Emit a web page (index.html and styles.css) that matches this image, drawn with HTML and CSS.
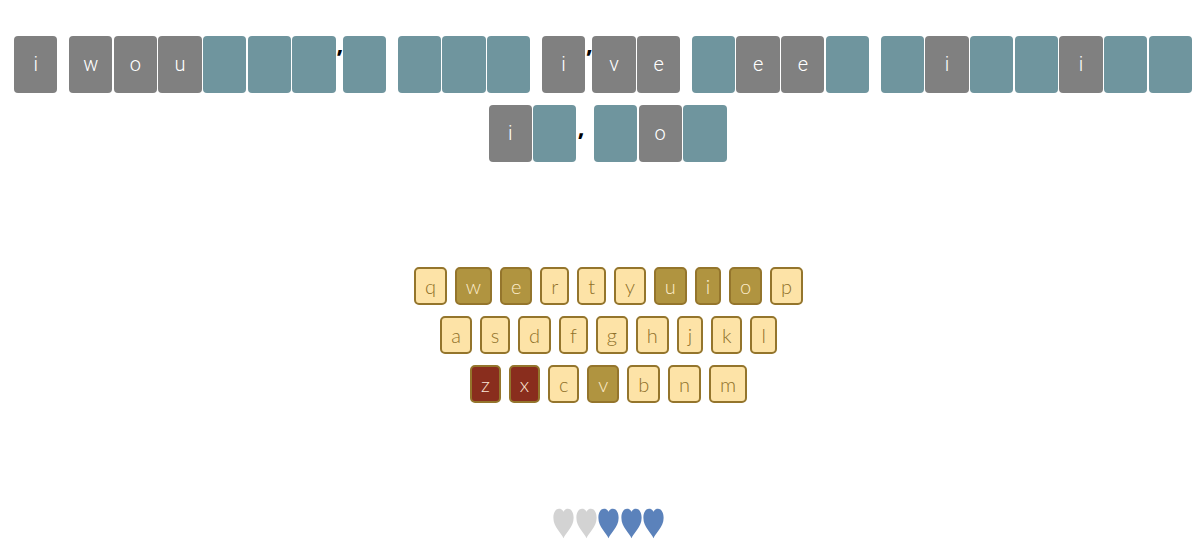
FILE: index.html
```html
<!DOCTYPE html>
<html lang="en">
<head>
    <meta charset="UTF-8">
    <meta name="viewport" content="width=device-width, initial-scale=1.0">
    <title>Movie Quote Hangman</title>
    <link rel="stylesheet" href="styles.css">
</head>
<body>

    <div class="puzzle">
        <div class="line line-first">
            <div class="word"><span class="tile shown">i</span></div>
            <div class="word">
                <span class="tile shown">w</span><span class="tile shown">o</span><span class="tile shown">u</span><span class="tile"></span><span class="tile"></span><span class="tile"></span><span class="mark">’</span><span class="tile"></span>
            </div>
            <div class="word"><span class="tile"></span><span class="tile"></span><span class="tile"></span></div>
            <div class="word">
                <span class="tile shown">i</span><span class="mark">’</span><span class="tile shown">v</span><span class="tile shown">e</span>
            </div>
            <div class="word">
                <span class="tile"></span><span class="tile shown">e</span><span class="tile shown">e</span><span class="tile"></span>
            </div>
            <div class="word">
                <span class="tile"></span><span class="tile shown">i</span><span class="tile"></span><span class="tile"></span><span class="tile shown">i</span><span class="tile"></span><span class="tile"></span>
            </div>
        </div>
        <div class="line line-second">
            <div class="word"><span class="tile shown">i</span><span class="tile"></span><span class="mark">,</span></div>
            <div class="word"><span class="tile"></span><span class="tile shown">o</span><span class="tile"></span></div>
        </div>
    </div>

    <div class="keyboard">
        <div class="key-row">
            <button class="key">q</button>
            <button class="key used">w</button>
            <button class="key used">e</button>
            <button class="key">r</button>
            <button class="key">t</button>
            <button class="key">y</button>
            <button class="key used">u</button>
            <button class="key used">i</button>
            <button class="key used">o</button>
            <button class="key">p</button>
        </div>
        <div class="key-row">
            <button class="key">a</button>
            <button class="key">s</button>
            <button class="key">d</button>
            <button class="key">f</button>
            <button class="key">g</button>
            <button class="key">h</button>
            <button class="key">j</button>
            <button class="key">k</button>
            <button class="key">l</button>
        </div>
        <div class="key-row">
            <button class="key wrong">z</button>
            <button class="key wrong">x</button>
            <button class="key">c</button>
            <button class="key used">v</button>
            <button class="key">b</button>
            <button class="key">n</button>
            <button class="key">m</button>
        </div>
    </div>

    <div class="lives">
        <svg class="heart lost" viewBox="0 0 22 32"><path d="M11 31.5 C9 26 0.4 20 0.4 10 C0.4 4 3 0.5 6.5 0.5 C8.5 0.5 10 1.5 11 3.8 C12 1.5 13.5 0.5 15.5 0.5 C19 0.5 21.6 4 21.6 10 C21.6 20 13 26 11 31.5 Z"/></svg>
        <svg class="heart lost" viewBox="0 0 22 32"><path d="M11 31.5 C9 26 0.4 20 0.4 10 C0.4 4 3 0.5 6.5 0.5 C8.5 0.5 10 1.5 11 3.8 C12 1.5 13.5 0.5 15.5 0.5 C19 0.5 21.6 4 21.6 10 C21.6 20 13 26 11 31.5 Z"/></svg>
        <svg class="heart" viewBox="0 0 22 32"><path d="M11 31.5 C9 26 0.4 20 0.4 10 C0.4 4 3 0.5 6.5 0.5 C8.5 0.5 10 1.5 11 3.8 C12 1.5 13.5 0.5 15.5 0.5 C19 0.5 21.6 4 21.6 10 C21.6 20 13 26 11 31.5 Z"/></svg>
        <svg class="heart" viewBox="0 0 22 32"><path d="M11 31.5 C9 26 0.4 20 0.4 10 C0.4 4 3 0.5 6.5 0.5 C8.5 0.5 10 1.5 11 3.8 C12 1.5 13.5 0.5 15.5 0.5 C19 0.5 21.6 4 21.6 10 C21.6 20 13 26 11 31.5 Z"/></svg>
        <svg class="heart" viewBox="0 0 22 32"><path d="M11 31.5 C9 26 0.4 20 0.4 10 C0.4 4 3 0.5 6.5 0.5 C8.5 0.5 10 1.5 11 3.8 C12 1.5 13.5 0.5 15.5 0.5 C19 0.5 21.6 4 21.6 10 C21.6 20 13 26 11 31.5 Z"/></svg>
    </div>

</body>
</html>
```

FILE: styles.css
```css
body {
    margin: 0;
    height: 550px;
    overflow: hidden;
    background: #fff;
    font-family: "Open Sans", sans-serif;
}
.puzzle {
    padding-top: 36px;
}
.line {
    display: flex;
    justify-content: center;
    gap: 11.6px;
    margin-bottom: 12.5px;
}
.line-first {
    padding-left: 6px;
}
.line-second {
    padding-left: 15px;
}
.word {
    display: flex;
    gap: 1.3px;
}
.tile {
    display: flex;
    align-items: center;
    justify-content: center;
    width: 43.35px;
    height: 56.5px;
    border-radius: 4px;
    background: #6f959e;
    color: #fff;
    font-family: "Roboto", sans-serif;
    font-size: 20px;
    font-weight: 300;
}
.tile.shown {
    background: #808080;
}
.mark {
    width: 4.5px;
    color: #000;
    font-size: 24px;
    font-weight: 700;
    line-height: 36px;
    text-align: center;
    padding-top: 4px;
}
.keyboard {
    margin-top: 105.5px;
}
.key-row {
    display: flex;
    justify-content: center;
    gap: 8px;
    margin-bottom: 11px;
    padding-left: 17px;
}
.key {
    height: 38px;
    padding: 0 8.95px;
    border: 2px solid #94752c;
    border-radius: 5px;
    background: #fde3a7;
    color: #8f7029;
    font-family: "Lato", sans-serif;
    font-size: 20px;
    font-weight: 300;
}
.key.used {
    background: #b09440;
    color: #fdeccb;
}
.key.wrong {
    background: #892d1d;
    color: #fbe6d6;
}
.lives {
    display: flex;
    justify-content: center;
    gap: 1.5px;
    margin-top: 105px;
    padding-left: 17px;
}
.heart {
    width: 21px;
    height: 31px;
    fill: #5b82bb;
}
.heart.lost {
    fill: #d3d3d3;
}
```
